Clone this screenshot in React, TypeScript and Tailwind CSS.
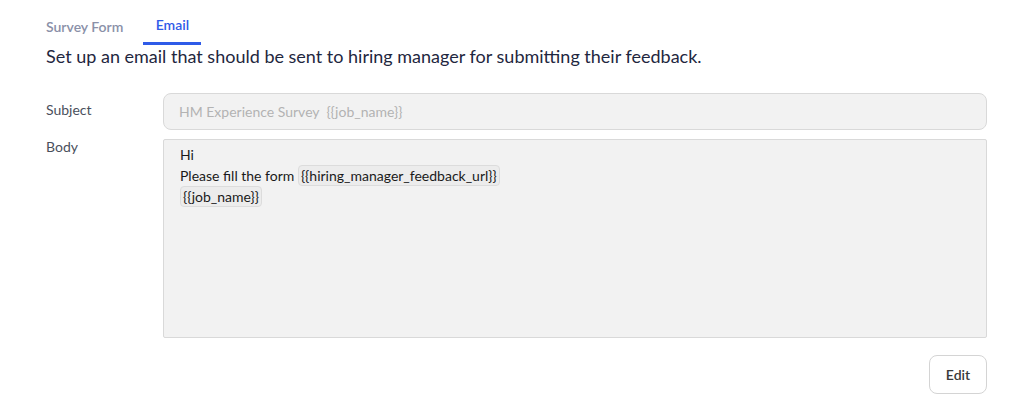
import React from "react";

function Chip({ children }: { children: React.ReactNode }) {
  return (
    <span className="inline-block rounded-[4px] border border-[#dcdcdc] bg-[#ececec] px-[2px] leading-[19px]">
      {children}
    </span>
  );
}

export default function App() {
  return (
    <div className="min-h-[411px] w-[1013px] bg-white font-['Lato',sans-serif]">
      <div className="flex pl-[46px] pt-[14px]">
        <div className="pb-[8px] pt-[2px] text-[14px] font-semibold text-[#8a90a8]">Survey Form</div>
        <div className="ml-[20px] w-[58px] border-b-[3px] border-[#2f5be8] pb-[7px] text-center text-[14px] font-semibold text-[#2f5be8]">
          Email
        </div>
      </div>
      <p className="pl-[46px] pt-[0px] text-[18px] leading-[22px] text-[#1f2740]">
        Set up an email that should be sent to hiring manager for submitting their feedback.
      </p>
      <div className="mt-[26px] grid grid-cols-[117px_824px] gap-y-[9px] pl-[46px] text-[14px]">
        <div className="pt-[9px] leading-[16px] text-[#4a4f5c]">Subject</div>
        <div className="flex h-[37px] items-center rounded-[8px] border border-[#d9d9d9] bg-[#f2f2f2] px-[15px] text-[#b3b3b3]">
          HM Experience Survey&nbsp; {"{{job_name}}"}
        </div>
        <div className="pt-[0px] leading-[16px] text-[#4a4f5c]">Body</div>
        <div className="h-[199px] rounded-[2px] border border-[#d9d9d9] bg-[#f2f2f2] px-[16px] pt-[4px] text-[14px] leading-[21px] text-[#1a1a1a]">
          <div>Hi</div>
          <div>
            Please fill the form <Chip>{"{{hiring_manager_feedback_url}}"}</Chip>
          </div>
          <div>
            <Chip>{"{{job_name}}"}</Chip>
          </div>
        </div>
      </div>
      <div className="flex justify-end pr-[26px] pt-[17px]">
        <button className="h-[39px] w-[58px] rounded-[8px] border border-[#d4d4d4] bg-white text-[14px] font-semibold text-[#3a3a3a]">
          Edit
        </button>
      </div>
    </div>
  );
}
